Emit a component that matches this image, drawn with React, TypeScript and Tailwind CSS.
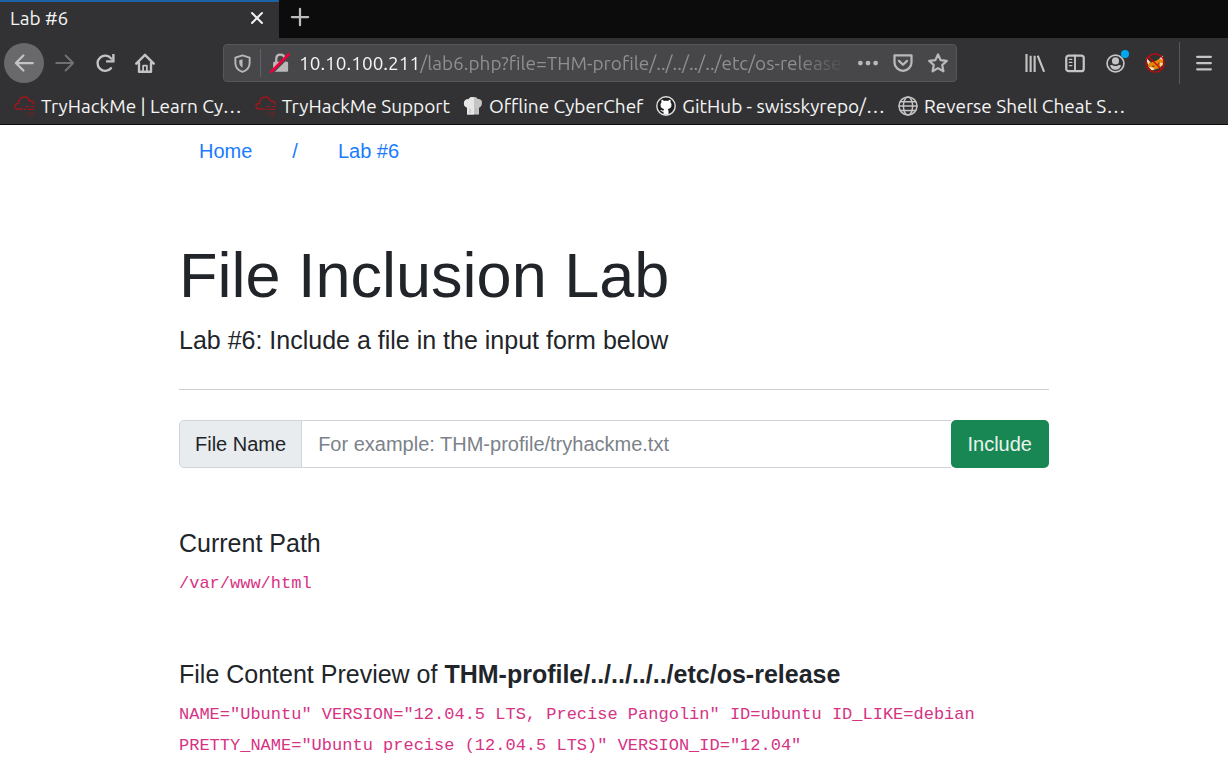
import type { ReactNode } from 'react';

function Svg({ size = 20, className = '', children }: { size?: number; className?: string; children: ReactNode }) {
  return (
    <svg
      width={size}
      height={size}
      viewBox="0 0 16 16"
      fill="none"
      stroke="currentColor"
      strokeWidth="1.8"
      strokeLinecap="round"
      strokeLinejoin="round"
      className={`shrink-0 ${className}`}
      aria-hidden="true"
    >
      {children}
    </svg>
  );
}

function CloudIcon() {
  return (
    <svg width="21" height="21" viewBox="0 0 21 21" fill="none" stroke="#a3151b" strokeWidth="1.4" className="shrink-0" aria-hidden="true">
      <path d="M9 13H4.500C2.500 13 1 11.800 1 10.200C1 8.400 2.600 7.300 4.500 7.500C4.400 3.800 6.500 1 10.200 1C13 1 14.800 2.600 15.400 5C18 4.800 20 6.400 20.200 8.800" />
      <path d="M11 10.500H15M17 10.500H20.500M10 13.300H12.500M14 13.300H20" strokeWidth="1.2" />
      <path d="M12 17H14.500M16 17.500H20M14 20H15.500M17 20H19" strokeWidth="1.100" opacity="0.7" />
    </svg>
  );
}

function ChefHatIcon() {
  return (
    <svg width="20" height="20" viewBox="0 0 20 20" className="shrink-0" aria-hidden="true">
      <path d="M4 18.500V11.500C1.500 11 .5 8.500 1 6.500C1.500 4 3.700 3 5.500 3.400C6.500 1.200 8.500 .8 10 1.200C12 .6 14 1.300 14.800 3C17 2.500 19 4 19 6.300C19.200 9 18 11.300 16 11.700V18.500Z" fill="#c4c4c4" />
      <path d="M4 18.500V11.500C1.500 11 .5 8.500 1 6.500C1.500 4 3.700 3 5.500 3.400C6.500 1.200 8.500 1 11 1.300V18.500Z" fill="#e6e6e6" />
      <path d="M7 13V17M13 12V17" stroke="#b5b5b5" strokeWidth="1" />
    </svg>
  );
}

function GitHubIcon() {
  return (
    <svg width="20" height="20" viewBox="0 0 20 20" className="shrink-0" aria-hidden="true">
      <circle cx="10" cy="10" r="9.200" fill="#202022" stroke="#dedede" strokeWidth="1.400" />
      <path d="M7.500 18.500V15.800C5.300 16 5.100 14.500 4.200 14C5.600 13.700 6 15 7.600 14.500C7.700 13.800 8 13.400 8.300 13.200C5.700 12.700 4.500 11.300 4.500 8.800C4.500 7.700 4.800 6.900 5.500 6.200C5.200 5.300 5.300 4.500 5.600 3.800C6.600 3.800 7.300 4.300 8 4.900C9.300 4.600 10.700 4.600 12 4.900C12.700 4.300 13.500 3.800 14.400 3.800C14.700 4.500 14.800 5.300 14.500 6.200C15.200 6.900 15.500 7.700 15.500 8.800C15.500 11.300 14.300 12.700 11.700 13.200C12.200 13.600 12.500 14.200 12.500 15V18.500Z" fill="#fff" />
    </svg>
  );
}

function GlobeIcon() {
  return (
    <Svg className="text-[#c4c4c5]">
      <g strokeWidth="1.2">
        <circle cx="8" cy="8" r="7.2" />
        <ellipse cx="8" cy="8" rx="3.700" ry="7.200" />
        <path d="M.8 8H15.200M2 4.500H14M2 11.500H14" />
      </g>
    </Svg>
  );
}

function FoxIcon() {
  return (
    <svg width="20" height="20" viewBox="0 0 20 20" className="shrink-0" aria-hidden="true">
      <path d="M1.500 5.500L6 9.500L11.500 7.500L18 3L18 12L14.500 15L7 17.500L3.500 14Z" fill="#e8860c" />
      <path d="M1 4.500L5 9L3 11.500ZM14.500 5.500L18 2.500L17.500 7Z" fill="#f3e3d0" />
      <path d="M4 14L8 14.500L9.500 16.500L6.500 17ZM15 9.500L18 10.500L15.500 14Z" fill="#f3e3d0" />
      <path d="M7 13.500L9.500 13M13 12L14 9.500" stroke="#6b3a08" strokeWidth="1" />
      <circle cx="10" cy="10" r="9.200" fill="none" stroke="#c4090d" strokeWidth="1.300" />
      <path d="M3.500 3.500L16.500 16.500" stroke="#c4090d" strokeWidth="1.300" />
    </svg>
  );
}

function IconButton({ label, className = '', children }: { label: string; className?: string; children: ReactNode }) {
  return (
    <button type="button" aria-label={label} className={`flex size-10 shrink-0 items-center justify-center ${className}`}>
      {children}
    </button>
  );
}

function TabBar() {
  return (
    <div className="flex h-[38px] bg-[#0c0c0d]">
      <div className="flex w-[279px] items-center justify-between border-t-2 border-[#1c62a6] bg-[#323234] pr-3 pb-1 pl-[10px]">
        <span className="text-[19px] leading-6">Lab #6</span>
        <button type="button" aria-label="Close tab" className="flex size-5 items-center justify-center text-[#f0f0f0]">
          <Svg size={16}>
            <path d="M3 3L13 13M13 3L3 13" strokeWidth="2" />
          </Svg>
        </button>
      </div>
      <button type="button" aria-label="New tab" className="flex w-[42px] items-center justify-center pb-1 text-[#bcbcbd]">
        <Svg>
          <path d="M8 1.500V14.500M1.500 8H14.500" />
        </Svg>
      </button>
    </div>
  );
}

function AddressBar() {
  return (
    <div className="mr-[58px] ml-[58px] flex h-[38px] min-w-0 flex-1 items-center rounded border border-[#57575a] bg-[#474749] text-[#b9b9ba]">
      <button type="button" aria-label="Tracking protection" className="flex w-9 shrink-0 items-center justify-center">
        <Svg size={19}>
          <path d="M8 1.200L14 3V7.500C14 11.200 11.500 13.800 8 15C4.500 13.800 2 11.200 2 7.500V3Z" strokeWidth="1.600" />
          <path d="M8 4.500V11.500C6 10.500 5.300 9 5.300 7V5.200Z" fill="currentColor" stroke="none" />
        </Svg>
      </button>
      <span className="h-7 w-px shrink-0 bg-[#5d6070]" />
      <button type="button" aria-label="Connection is not secure" className="flex w-[38px] shrink-0 items-center justify-center">
        <Svg>
          <rect x="2.500" y="7" width="12" height="8" rx="1" fill="currentColor" stroke="none" />
          <path d="M5 7V4.500C5 2.500 6.300 1.200 8.300 1.200C10.300 1.200 11.600 2.500 11.600 4.500V7" />
          <path d="M2 15.500L15.500 2" stroke="#474749" strokeWidth="2" />
          <path d="M1 15L15 1" stroke="#f2003c" strokeWidth="2" />
        </Svg>
      </button>
      <div
        role="textbox"
        aria-label="Address"
        contentEditable
        suppressContentEditableWarning
        className="min-w-0 flex-1 overflow-hidden text-[19px] whitespace-nowrap text-[#8f8f90] outline-none [mask-image:linear-gradient(to_left,transparent,black_50px)]"
      >
        <span className="text-[#f5f5f5]">10.10.100.211</span>/lab6.php?file=THM-profile/../../../../etc/os-release
      </div>
      <div className="flex shrink-0 items-center gap-[15px] pr-2 pl-3">
        <button type="button" aria-label="Page actions">
          <Svg>
            <g fill="currentColor" stroke="none">
              <circle cx="1.900" cy="8" r="1.900" />
              <circle cx="8" cy="8" r="1.900" />
              <circle cx="14.100" cy="8" r="1.900" />
            </g>
          </Svg>
        </button>
        <button type="button" aria-label="Save to Pocket">
          <Svg>
            <path d="M1.200 1.800H14.800V7.500C14.800 11.500 11.500 14.200 8 14.200C4.500 14.200 1.200 11.500 1.200 7.500Z" />
            <path d="M4.800 6.300L8 9.400L11.200 6.300" />
          </Svg>
        </button>
        <button type="button" aria-label="Bookmark this page">
          <Svg>
            <path d="M8 1.200L10.100 5.700L15 6.300L11.400 9.600L12.300 14.600L8 12.100L3.700 14.600L4.600 9.600L1 6.300L5.900 5.700Z" />
          </Svg>
        </button>
      </div>
    </div>
  );
}

function NavBar() {
  return (
    <div className="flex h-[50px] items-center px-1 text-[#c4c4c5]">
      <IconButton label="Back" className="mr-px rounded-full bg-[#69696b]">
        <Svg>
          <path d="M15 8H1.500M7.500 2L1.500 8L7.500 14" />
        </Svg>
      </IconButton>
      <IconButton label="Forward" className="text-[#717173]">
        <Svg>
          <path d="M1 8H14.500M8.500 2L14.500 8L8.500 14" strokeWidth="1.600" />
        </Svg>
      </IconButton>
      <IconButton label="Reload">
        <Svg>
          <path d="M12.800 12.200A6.100 6.100 0 1 1 13 4.500" strokeWidth="1.900" />
          <path d="M14.700 1.800V6.700H9.800" strokeWidth="1.900" strokeLinecap="square" strokeLinejoin="miter" />
        </Svg>
      </IconButton>
      <IconButton label="Home">
        <Svg>
          <path d="M1 8.500L8 1.500L15 8.500M3.200 8V15H12.800V8" strokeWidth="1.900" />
          <path d="M6.500 15V10H9.500V15" strokeWidth="1.400" />
        </Svg>
      </IconButton>
      <AddressBar />
      <IconButton label="Library">
        <Svg>
          <path d="M1.200 1.700V14.300M4.500 3V14.300M7.700 3V14.300M10.500 3L15 14.300" strokeWidth="1.700" strokeLinecap="square" />
        </Svg>
      </IconButton>
      <IconButton label="Sidebars">
        <Svg>
          <rect x="1" y="2" width="14" height="12.500" rx="2" />
          <path d="M8 2V14.500" strokeWidth="1.500" />
          <path d="M3.500 5H5.500M3.500 7.500H5.500M3.500 10H5.500" strokeWidth="1" />
        </Svg>
      </IconButton>
      <IconButton label="Account" className="relative">
        <Svg size={19}>
          <circle cx="8" cy="8" r="7.100" strokeWidth="1.400" />
          <circle cx="8" cy="5.800" r="3" fill="currentColor" stroke="none" />
          <path d="M3.500 9.300H5.300C6.500 10.500 9.500 10.500 10.700 9.300H12.500C12.300 12.200 10 13.300 8 13.300C6 13.300 3.800 12.200 3.500 9.300Z" fill="currentColor" stroke="none" />
        </Svg>
        <span className="absolute top-[7px] right-[6px] size-2 rounded-full bg-[#00a8f3]" />
      </IconButton>
      <IconButton label="FoxyProxy">
        <FoxIcon />
      </IconButton>
      <div className="ml-1 h-[42px] w-px bg-[#58585a]" />
      <IconButton label="Open menu" className="ml-1">
        <Svg>
          <path d="M2.500 3H13.500M2.500 8H13.500M2.500 13H13.500" />
        </Svg>
      </IconButton>
    </div>
  );
}

const bookmarks = [
  { label: 'TryHackMe | Learn Cy…', icon: <CloudIcon /> },
  { label: 'TryHackMe Support', icon: <CloudIcon /> },
  { label: 'Offline CyberChef', icon: <ChefHatIcon /> },
  { label: 'GitHub - swisskyrepo/…', icon: <GitHubIcon /> },
  { label: 'Reverse Shell Cheat S…', icon: <GlobeIcon /> },
];

function BookmarksBar() {
  return (
    <nav aria-label="Bookmarks" className="flex h-[37px] items-center gap-[13px] overflow-hidden border-b border-[#0c0c0d] pl-[14px]">
      {bookmarks.map((b) => (
        <a key={b.label} href="#" className="flex items-center gap-[6px] text-[19px] whitespace-nowrap">
          {b.icon}
          {b.label}
        </a>
      ))}
    </nav>
  );
}

export default function App() {
  return (
    <div className="min-h-screen bg-white">
      <header className="bg-[#323234] font-['Ubuntu','Noto_Sans',sans-serif] text-[#f5f5f5]">
        <TabBar />
        <NavBar />
        <BookmarksBar />
      </header>

      <main className="mx-auto max-w-[870px] font-['Liberation_Sans',Arial,sans-serif] text-[#212529]">
        <nav aria-label="Breadcrumb" className="flex gap-10 px-5 pt-[11px] text-[20px] leading-[30px] text-[#1a7bff]">
          <a href="#">Home</a>
          <span>/</span>
          <a href="#">Lab #6</a>
        </nav>

        <h1 className="mt-[71px] text-[63px] leading-[76px]">File Inclusion Lab</h1>
        <p className="mt-2 text-[25px] leading-[38px]">Lab #6: Include a file in the input form below</p>
        <hr className="mt-[30px] border-[#d0d1d2]" />

        <form className="mt-[30px] flex h-12 text-[20px]" onSubmit={(e) => e.preventDefault()}>
          <label htmlFor="file" className="flex items-center rounded-l-[5px] border border-[#ced4da] bg-[#e9ecef] px-[15px]">
            File Name
          </label>
          <input
            id="file"
            type="text"
            placeholder="For example: THM-profile/tryhackme.txt"
            className="min-w-0 flex-1 border-y border-[#ced4da] bg-white px-4 outline-none placeholder:text-[#7b8289]"
          />
          <button type="submit" className="rounded-[5px] bg-[#198754] px-[17px] text-[#e8f3ee]">
            Include
          </button>
        </form>

        <section className="mt-[60px]">
          <h2 className="text-[25px] leading-[30px]">Current Path</h2>
          <code className="mt-[10px] block font-['Liberation_Mono',monospace] text-[17px] leading-[31px] text-[#d63384]">/var/www/html</code>
        </section>

        <section className="mt-[60px]">
          <h2 className="text-[25px] leading-[30px]">
            File Content Preview of <strong>THM-profile/../../../../etc/os-release</strong>
          </h2>
          <code className="mt-[10px] block font-['Liberation_Mono',monospace] text-[17px] leading-[31px] text-[#d63384]">
            NAME="Ubuntu" VERSION="12.04.5 LTS, Precise Pangolin" ID=ubuntu ID_LIKE=debian
            <br />
            PRETTY_NAME="Ubuntu precise (12.04.5 LTS)" VERSION_ID="12.04"
          </code>
        </section>
      </main>
    </div>
  );
}
